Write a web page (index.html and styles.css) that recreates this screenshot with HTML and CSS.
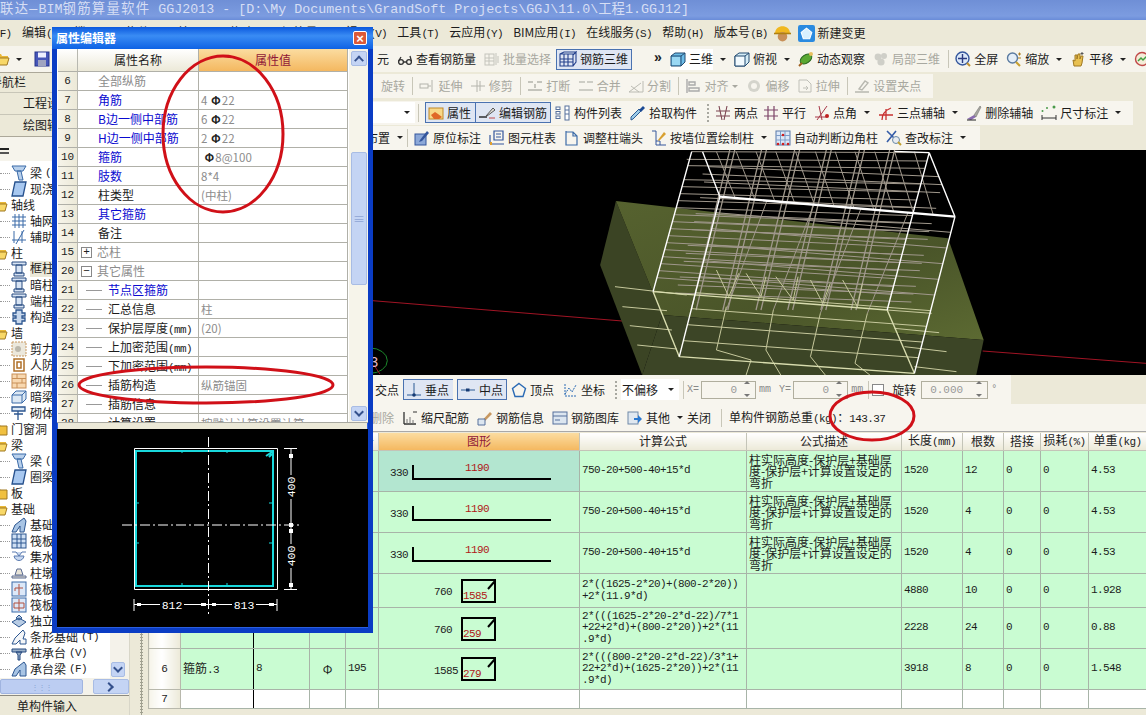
FILE: index.html
```html
<!DOCTYPE html>
<html lang="zh">
<head>
<meta charset="utf-8">
<title>GGJ2013</title>
<link rel="stylesheet" href="styles.css">
</head>
<body>
<svg class="sprite" aria-hidden="true">
<symbol id="folder" viewBox="0 0 16 16"><path d="M1 5l1-2h5l1 2h6v2H1z" fill="#e8b838"/><path d="M1 14l2-7h12l-2 7z" fill="#f8d868" stroke="#a07820"/></symbol>
<symbol id="folderc" viewBox="0 0 16 16"><path d="M1 3h6l1 2h7v9H1z" fill="#f0c040" stroke="#a07820"/></symbol>
<symbol id="save" viewBox="0 0 16 16"><rect x="1" y="1" width="14" height="14" fill="#4656b8" stroke="#26348c"/><rect x="4" y="1.500" width="8" height="5" fill="#eef0ff"/><rect x="4" y="9" width="8" height="6" fill="#a0a4c0"/></symbol>
<symbol id="glasses" viewBox="0 0 16 16"><g fill="none" stroke="#333" stroke-width="1.300"><circle cx="4" cy="11" r="2.400"/><circle cx="12" cy="11" r="2.400"/><path d="M6.400 11h3.200M1.600 10L4 6M14.400 10L13 5"/></g></symbol>
<symbol id="batch" viewBox="0 0 16 16"><g fill="none" stroke="#c4c4bc"><rect x="1" y="3" width="9" height="11"/><path d="M1 7h9M1 10h9M5 3v11M12 2v12M14 5v7"/></g></symbol>
<symbol id="rebar3d" viewBox="0 0 18 16"><g fill="none" stroke="#23408c" stroke-width="1.100"><path d="M1 3l4-2h12l-3 3v11H1zM1 3h13v12M14 4l3-3v10l-3 4M1 8h13M1 11h13M5 3v12M9 3v12"/></g></symbol>
<symbol id="cube" viewBox="0 0 16 16"><path d="M1 5l4-3h10v9l-4 4H1z" fill="#6cbce8" stroke="#234a70"/><path d="M1 5h10v10M11 5l4-3" fill="none" stroke="#234a70"/><path d="M2 6h8v8H2z" fill="#9ad8f4"/></symbol>
<symbol id="cube2" viewBox="0 0 16 16"><path d="M1 5l4-3h10v9l-4 4H1z" fill="#d4ecf6" stroke="#234a70"/><path d="M1 5h10v10H1z" fill="#f2fafe" stroke="#234a70"/><path d="M11 5l4-3" fill="none" stroke="#234a70"/></symbol>
<symbol id="orbit" viewBox="0 0 16 16"><ellipse cx="8" cy="8" rx="6.500" ry="4" transform="rotate(-35 8 8)" fill="#5aa832" stroke="#2c6a20"/><path d="M1 15l3-3" stroke="#a06020" stroke-width="2"/><circle cx="13" cy="3" r="2" fill="#e8c060"/></symbol>
<symbol id="local3d" viewBox="0 0 16 16"><g fill="#cfcfc8"><circle cx="5" cy="6" r="3.400"/><circle cx="11" cy="5" r="3"/><circle cx="8" cy="11" r="3.600"/></g></symbol>
<symbol id="fit" viewBox="0 0 16 16"><circle cx="7.500" cy="7.500" r="6.500" fill="#dbe8f8" stroke="#34569c" stroke-width="1.400"/><path d="M7.500 3v9M3 7.500h9" stroke="#2a3a80" stroke-width="1.400"/><path d="M12 12l3 3" stroke="#c09030" stroke-width="2"/></symbol>
<symbol id="magn" viewBox="0 0 16 16"><circle cx="6.500" cy="7" r="5" fill="#e4eef8" stroke="#5a7aa0" stroke-width="1.400"/><path d="M10 11l4 4" stroke="#c8a030" stroke-width="2.200"/><path d="M12 3h3M13.500 1.500v3M12 7h3" stroke="#b08020"/></symbol>
<symbol id="hand" viewBox="0 0 16 16"><path d="M4 15l-1-6 2 1V4h2v4l1-5h2v5l1-3h2l-1 7-1 3z" fill="#e8c050" stroke="#a07820"/><path d="M12 1v3M10.500 2.500h3" stroke="#555"/></symbol>
<symbol id="refresh" viewBox="0 0 16 16"><circle cx="8" cy="8" r="6.500" fill="#f4ecd8" stroke="#c04848" stroke-width="1.400"/><path d="M4 10l3-3 2 2 4-4" fill="none" stroke="#40a040" stroke-width="1.500"/></symbol>
<symbol id="extend" viewBox="0 0 16 16"><g fill="none" stroke="#b4b4ac"><rect x="1" y="6" width="8" height="4"/><path d="M13 2v12M9 8h3"/></g></symbol>
<symbol id="trim" viewBox="0 0 16 16"><g fill="none" stroke="#b4b4ac"><path d="M1 8h14M7 2v12M10 3v10"/></g></symbol>
<symbol id="brk" viewBox="0 0 16 16"><g fill="#c4c4bc"><rect x="1" y="3" width="5" height="2"/><rect x="10" y="3" width="5" height="2"/><rect x="1" y="11" width="14" height="2"/><rect x="7" y="6" width="2" height="4"/></g></symbol>
<symbol id="merge" viewBox="0 0 16 16"><g fill="#cdcdc5"><rect x="1" y="3" width="6" height="2"/><rect x="9" y="3" width="6" height="2"/><rect x="1" y="11" width="14" height="2"/></g></symbol>
<symbol id="split" viewBox="0 0 16 16"><g fill="none" stroke="#bcbcb4"><path d="M1 14h14L15 3M1 14l12-9M3 8l8 6"/></g></symbol>
<symbol id="align" viewBox="0 0 16 16"><g fill="none" stroke="#aaa" stroke-width="1.400"><path d="M2 1v14M4 4h6v3H4zM4 10h10v3H4z"/></g></symbol>
<symbol id="offs" viewBox="0 0 16 16"><g fill="#d4d4cc"><circle cx="8" cy="8" r="6"/><circle cx="8" cy="8" r="3" fill="#f7f5ee"/></g></symbol>
<symbol id="stretch" viewBox="0 0 16 16"><g fill="none" stroke="#c0c0b8"><path d="M2 2h8l4 4v8H2zM6 10h5M9 8l2 2-2 2"/></g></symbol>
<symbol id="grips" viewBox="0 0 16 16"><g fill="none" stroke="#b8b8b0" stroke-width="1.400"><path d="M1 14h14M5 11l6-8 3 2-6 7z"/></g></symbol>
<symbol id="prop" viewBox="0 0 16 16"><rect x="1" y="3" width="14" height="11" fill="#f8d888" stroke="#c08828"/><path d="M3 10l4-3 3 2 4 3-3 2H6z" fill="#e06828"/></symbol>
<symbol id="edit" viewBox="0 0 18 16"><path d="M1 12h8" stroke="#222" stroke-width="1.400"/><path d="M8 11l7-8 2 2-8 6z" fill="#e0e0d8" stroke="#555"/><path d="M11 13h6" stroke="#c04848"/></symbol>
<symbol id="list" viewBox="0 0 16 16"><g fill="#fff" stroke="#56709c"><rect x="1" y="2" width="4" height="2.500"/><rect x="1" y="6.500" width="4" height="2.500"/><rect x="1" y="11" width="4" height="2.500"/><rect x="10" y="1" width="4" height="14"/><path d="M10 5h4M10 9h4" fill="none"/></g></symbol>
<symbol id="pick" viewBox="0 0 16 16"><path d="M1 15l2-1 8-8-2-2-8 8z" fill="#9ccce8" stroke="#2a5a94"/><path d="M9 5l4-4 2 2-4 4z" fill="#1c4a94"/></symbol>
<symbol id="twopt" viewBox="0 0 16 16"><g stroke="#7c4450" fill="none"><path d="M4 1l3 14M12 1L9 15M1 6h14M1 11h14" stroke-width="1.100"/></g></symbol>
<symbol id="paral" viewBox="0 0 16 16"><path d="M5 1v14M11 1v14M1 5h14M1 11h14" stroke="#7c4468" fill="none" stroke-width="1.200"/></symbol>
<symbol id="angle" viewBox="0 0 16 16"><g fill="none" stroke="#a83848"><path d="M1 12h12M5 1l3 14M13 1L3 15"/></g><circle cx="13" cy="11" r="2" fill="#c02020"/></symbol>
<symbol id="three" viewBox="0 0 16 16"><g fill="none" stroke="#c83030" stroke-width="1.300"><path d="M1 10h14M4 15c0-7 4-10 9-12M8 4v11"/></g></symbol>
<symbol id="delax" viewBox="0 0 16 16"><path d="M1 14l7-4 2 2-5 3z" fill="#8a6cb0"/><path d="M8 10l6-9 1 1-5 10z" fill="#a8a8a0" stroke="#666" stroke-width=".5"/><path d="M1 15h9" stroke="#222"/></symbol>
<symbol id="dim" viewBox="0 0 16 16"><path d="M1 10v5M15 10v5M1 13h14" stroke="#333" fill="none"/><circle cx="1.500" cy="6" r="1" fill="#4a9a4a"/><circle cx="6" cy="3" r="1" fill="#4a9a4a"/><circle cx="13" cy="2" r="1.500" fill="#4a9a4a"/></symbol>
<symbol id="orig" viewBox="0 0 16 16"><rect x="1" y="4" width="11" height="11" fill="#8ca8d8" stroke="#34569c"/><path d="M6 10l7-9 2 2-7 8-3 1z" fill="#34569c"/></symbol>
<symbol id="coltab" viewBox="0 0 16 16"><g fill="none" stroke="#34569c"><path d="M1 14h14M1 5v9M5 1h9v9H5z" stroke-width="1.200"/><path d="M7 4h5M7 7h5"/></g><rect x="1" y="12" width="2" height="3" fill="#e0a030"/></symbol>
<symbol id="adj" viewBox="0 0 16 16"><g fill="none" stroke="#3c6ca8" stroke-width="1.200"><path d="M2 1v14h11V6l-4-4H2M9 2v4h4"/></g></symbol>
<symbol id="wallcol" viewBox="0 0 16 16"><g fill="none" stroke="#34569c"><path d="M1 1h4v14h10M5 11h4v4"/></g><path d="M7 10l6-8 2 2-7 7z" fill="#d8a030"/></symbol>
<symbol id="auto" viewBox="0 0 16 16"><rect x="1" y="1" width="14" height="14" fill="#dce8f8" stroke="#5878a8"/><path d="M1 5.500h14M1 10h14M5.500 1v14M10 1v14" stroke="#7c9cc8" fill="none"/><g fill="#d02020"><circle cx="8" cy="5" r="1.300"/><circle cx="3" cy="14" r="1.300"/><circle cx="8" cy="14" r="1.300"/><circle cx="13" cy="14" r="1.300"/></g></symbol>
<symbol id="review" viewBox="0 0 16 16"><path d="M1 1l9 9M10 1L1 12" stroke="#345ca8" stroke-width="1.600" fill="none"/><circle cx="10" cy="10" r="3.500" fill="#e8ecf0" stroke="#6888a8"/><path d="M12 12l3 3" stroke="#c0a030" stroke-width="2"/></symbol>
<symbol id="foot" viewBox="0 0 16 16"><path d="M1 13h14" stroke="#2a5a94"/><path d="M8 1v12" stroke="#2a5a94"/><circle cx="8" cy="13" r="1.800" fill="#163a74"/></symbol>
<symbol id="mid" viewBox="0 0 16 16"><path d="M1 8h14" stroke="#2a5a94"/><rect x="6" y="6.500" width="3.500" height="3" fill="#163a74"/></symbol>
<symbol id="vert" viewBox="0 0 16 16"><path d="M8 1.500l6.500 5-2.500 8H4l-2.500-8z" fill="none" stroke="#2a6ab4" stroke-width="1.400"/></symbol>
<symbol id="coord" viewBox="0 0 16 16"><path d="M3 2v12h12M3 12l4-6 3 4 4-7" fill="none" stroke="#2a6ab4" stroke-dasharray="2 1"/></symbol>
<symbol id="scale" viewBox="0 0 16 16"><path d="M2 2v12M2 14h12" stroke="#333" stroke-width="1.300" fill="none"/><path d="M5 14V9M8 14V7M11 14V10" stroke="#777" fill="none"/><path d="M11 2h4" stroke="#333"/></symbol>
<symbol id="info" viewBox="0 0 16 16"><path d="M1 15L13 2l2 2L4 15z" fill="#c89860"/><path d="M1 9h7v6H1z" fill="#dce6f0" stroke="#56709c"/></symbol>
<symbol id="lib" viewBox="0 0 16 16"><rect x="1" y="2" width="14" height="12" fill="#dce6f0" stroke="#56709c"/><path d="M1 6h14M3 10h5" stroke="#56709c"/></symbol>
<symbol id="other" viewBox="0 0 16 16"><rect x="1" y="2" width="10" height="12" fill="#e0e8f0" stroke="#708aa8"/><path d="M7 8h4V5l4 4-4 4v-3H7z" fill="#2a78d0"/></symbol>
<symbol id="beam" viewBox="0 0 16 16"><path d="M1 1h14l-3 5H4zM6 6h4l2 9H8z" fill="#b8d0ec" stroke="#3a6aa8"/></symbol>
<symbol id="plate" viewBox="0 0 16 16"><path d="M4 1h11l-3 14H1z" fill="#a8c8f0" stroke="#26508c" stroke-width="1.300"/></symbol>
<symbol id="grid" viewBox="0 0 16 16"><path d="M4 1v14M8 1v14M12 1v14M1 4h14M1 8h14M1 12h14" stroke="#3a6aa8" fill="none"/></symbol>
<symbol id="aux" viewBox="0 0 16 16"><path d="M3 14V2M11 14V2M1 11h14M13 1L5 15" stroke="#3a6aa8" fill="none"/></symbol>
<symbol id="col" viewBox="0 0 16 16"><path d="M1 1h14v3H1zM5 4h6v8H5zM3 12h10v3H3z" fill="#d8e4f4" stroke="#264a80"/></symbol>
<symbol id="puzzle" viewBox="0 0 16 16"><path d="M5 1h6v3h3v3h-3v2h3v3h-3v3H5v-3H2V9h3V7H2V4h3z" fill="#c8d8ec" stroke="#2c5690" stroke-width="1.300"/></symbol>
<symbol id="shear" viewBox="0 0 16 16"><rect x="1" y="1" width="14" height="14" fill="#ece8dc" stroke="#c89860" stroke-dasharray="2 1"/><circle cx="7" cy="8" r="3" fill="#bcb8ac"/></symbol>
<symbol id="door" viewBox="0 0 16 16"><path d="M3 2h10v12H3zM6 5h4v6H6z" fill="none" stroke="#b07028" stroke-width="1.500"/></symbol>
<symbol id="brick" viewBox="0 0 16 16"><rect x="1" y="1" width="14" height="14" fill="#f8d8b0" stroke="#c89058"/><path d="M1 5.500h14M1 10h14M6 1v4.500M11 5.500V10M6 10v5" stroke="#c89058" fill="none"/></symbol>
<symbol id="dbeam" viewBox="0 0 16 16"><path d="M1 6l4-4h10v8l-4 4H1z" fill="#dce8f4" stroke="#3a6aa8"/><path d="M1 6h10v8M11 6l4-4" fill="none" stroke="#3a6aa8"/></symbol>
<symbol id="brebar" viewBox="0 0 16 16"><path d="M1 2h13v4H1zM7 6v9M3 9h9" fill="#dce8f4" stroke="#2c5690" stroke-width="1.300"/></symbol>
<symbol id="found" viewBox="0 0 16 16"><path d="M1 15l3-7 9-7 2 3-2 11H9V9L5 15z" fill="#a8c4e4" stroke="#2c5690"/></symbol>
<symbol id="raft" viewBox="0 0 16 16"><rect x="1" y="1" width="14" height="14" fill="#cfe0f4" stroke="#2c5690"/><path d="M1 6h14M1 10h14M6 1v14M10 1v14" stroke="#2c5690" fill="none"/></symbol>
<symbol id="pit" viewBox="0 0 16 16"><path d="M1 3h4l3 4 3-4h4M3 7c1 6 9 6 10 0z" fill="#c8d8f0" stroke="#5a7ab0"/></symbol>
<symbol id="pier" viewBox="0 0 16 16"><path d="M6 4h4l2 6H4zM1 11h14v2H1z" fill="#e8e4d8" stroke="#5a6a90"/></symbol>
<symbol id="raftx" viewBox="0 0 16 16"><rect x="1" y="1" width="14" height="14" fill="#dce8f8" stroke="#3a6aa8"/><path d="M8 3v11M4 7h8M4 7v3" stroke="#b05040" fill="none"/></symbol>
<symbol id="raftm" viewBox="0 0 16 16"><rect x="1" y="1" width="14" height="14" fill="#dce8f8" stroke="#3a6aa8"/><path d="M8 2v12M3 6h10v5H3z" stroke="#b05040" fill="none"/></symbol>
<symbol id="indep" viewBox="0 0 16 16"><path d="M1 9l7-4 7 4-7 5zM5 5l3-3 3 3-3 2z" fill="#b8cce4" stroke="#2c5690"/></symbol>
<symbol id="strip" viewBox="0 0 16 16"><path d="M1 15l3-6 8-8 2 3-2 6h3v5H9v-4l-4 4z" fill="#f4f6f8" stroke="#2c5690"/></symbol>
<symbol id="cap" viewBox="0 0 16 16"><path d="M1 4h14v3H1zM5 7h6l-2 3v5H7v-5z" fill="#9ab0c8" stroke="#264a80"/></symbol>
<symbol id="capb" viewBox="0 0 16 16"><path d="M1 15l3-7 9-7 2 3v11H9V9L5 15z" fill="#a8c4e4" stroke="#2c5690"/></symbol>
</svg>

<div class="app">
  <header class="title"><span class="t-cn">联达—</span>BIM<span class="t-cn">钢筋算量软件</span> GGJ2013 - [D:\My Documents\GrandSoft Projects\GGJ\11.0\工程1.GGJ12]</header>

  <nav class="menu">
    <span class="m-f"><small>(F)</small></span><span>编辑<small>(E)</small></span><span>楼层<small>(L)</small></span><span>构件<small>(N)</small></span><span>绘图<small>(D)</small></span><span>修改<small>(M)</small></span><span>钢筋量<small>(Q)</small></span><span>视图<small>(V)</small></span><span>工具<small>(T)</small></span><span>云应用<small>(Y)</small></span><span>BIM应用<small>(I)</small></span><span>在线服务<small>(S)</small></span><span>帮助<small>(H)</small></span><span>版本号<small>(B)</small></span>
    <svg class="ic hat" viewBox="0 0 16 16"><path d="M1 8c0-9 14-9 14 0z" fill="#f0b820"/><circle cx="8" cy="11" r="4.500" fill="#c89058"/><path d="M0 8h16" stroke="#b08010" stroke-width="1.500"/></svg>
    <span class="newchg"><svg class="ic" viewBox="0 0 16 16"><rect width="16" height="16" rx="2" fill="#2a8ae0"/><path d="M8 3l5 4-2 6H5L3 7z" fill="#d8f0ff" stroke="#fff"/></svg>新建变更</span>
  </nav>

  <div class="bar t1">
    <div class="t1-left">
      <svg class="ic"><use href="#folder"/></svg><i class="dd"></i><svg class="ic"><use href="#save"/></svg><b class="sep"></b>
    </div>
    <span class="ti t1-first">元</span>
    <span class="ti"><svg class="ic"><use href="#glasses"/></svg>查看钢筋量</span>
    <span class="ti off tight"><svg class="ic"><use href="#batch"/></svg>批量选择</span>
    <span class="ti on"><svg class="ic wide"><use href="#rebar3d"/></svg>钢筋三维</span>
    <span class="more">»</span>
    <span class="ti tight hl"><svg class="ic"><use href="#cube"/></svg>三维</span><i class="dd"></i>
    <span class="ti tight"><svg class="ic"><use href="#cube2"/></svg>俯视</span><i class="dd"></i>
    <span class="ti"><svg class="ic"><use href="#orbit"/></svg>动态观察</span>
    <span class="ti off"><svg class="ic"><use href="#local3d"/></svg>局部三维</span><b class="sep"></b>
    <span class="ti"><svg class="ic"><use href="#fit"/></svg>全屏</span>
    <span class="ti tight"><svg class="ic"><use href="#magn"/></svg>缩放</span><i class="dd"></i>
    <span class="ti tight"><svg class="ic"><use href="#hand"/></svg>平移</span><i class="dd"></i>
    <svg class="ic"><use href="#refresh"/></svg>
  </div>

  <div class="body">
    <aside class="side">
      <div class="side-head"><span>导航栏</span></div>
      <div class="side-btn">工程设置</div>
      <div class="side-btn">绘图输入</div>
      <div class="side-tools"><i class="tool-bar"></i></div>
      <div class="tree-wrap">
        <ul class="tree">
          <li class="leaf"><svg class="ic"><use href="#beam"/></svg>梁<small>(L)</small></li>
          <li class="leaf"><svg class="ic"><use href="#plate"/></svg>现浇板<small>(B)</small></li>
          <li class="node"><svg class="ic"><use href="#folder"/></svg>轴线</li>
          <li class="leaf"><svg class="ic"><use href="#grid"/></svg>轴网<small>(J)</small></li>
          <li class="leaf"><svg class="ic"><use href="#aux"/></svg>辅助轴线<small>(O)</small></li>
          <li class="node"><svg class="ic"><use href="#folder"/></svg>柱</li>
          <li class="leaf"><svg class="ic"><use href="#col"/></svg><span class="sel-item">框柱<small>(Z)</small></span></li>
          <li class="leaf"><svg class="ic"><use href="#col"/></svg>暗柱<small>(Z)</small></li>
          <li class="leaf"><svg class="ic"><use href="#col"/></svg>端柱<small>(Z)</small></li>
          <li class="leaf"><svg class="ic"><use href="#puzzle"/></svg>构造柱<small>(Z)</small></li>
          <li class="node"><svg class="ic"><use href="#folder"/></svg>墙</li>
          <li class="leaf"><svg class="ic"><use href="#shear"/></svg>剪力墙<small>(Q)</small></li>
          <li class="leaf"><svg class="ic"><use href="#door"/></svg>人防门框墙<small>(RF)</small></li>
          <li class="leaf"><svg class="ic"><use href="#brick"/></svg>砌体墙<small>(Q)</small></li>
          <li class="leaf"><svg class="ic"><use href="#dbeam"/></svg>暗梁<small>(A)</small></li>
          <li class="leaf"><svg class="ic"><use href="#brebar"/></svg>砌体加筋<small>(Y)</small></li>
          <li class="node"><svg class="ic"><use href="#folderc"/></svg>门窗洞</li>
          <li class="node"><svg class="ic"><use href="#folder"/></svg>梁</li>
          <li class="leaf"><svg class="ic"><use href="#beam"/></svg>梁<small>(L)</small></li>
          <li class="leaf"><svg class="ic"><use href="#plate"/></svg>圈梁<small>(E)</small></li>
          <li class="node"><svg class="ic"><use href="#folderc"/></svg>板</li>
          <li class="node"><svg class="ic"><use href="#folder"/></svg>基础</li>
          <li class="leaf"><svg class="ic"><use href="#found"/></svg>基础梁<small>(F)</small></li>
          <li class="leaf"><svg class="ic"><use href="#raft"/></svg>筏板基础<small>(M)</small></li>
          <li class="leaf"><svg class="ic"><use href="#pit"/></svg>集水坑<small>(K)</small></li>
          <li class="leaf"><svg class="ic"><use href="#pier"/></svg>柱墩<small>(Y)</small></li>
          <li class="leaf"><svg class="ic"><use href="#raftx"/></svg>筏板主筋<small>(R)</small></li>
          <li class="leaf"><svg class="ic"><use href="#raftm"/></svg>筏板负筋<small>(X)</small></li>
          <li class="leaf"><svg class="ic"><use href="#indep"/></svg>独立基础<small>(D)</small></li>
          <li class="leaf"><svg class="ic"><use href="#strip"/></svg>条形基础<small>(T)</small></li>
          <li class="leaf"><svg class="ic"><use href="#cap"/></svg>桩承台<small>(V)</small></li>
          <li class="leaf"><svg class="ic"><use href="#capb"/></svg>承台梁<small>(F)</small></li>
        </ul>
        <div class="vscroll"><span class="sb-arrow down"></span></div>
      </div>
      <div class="hscroll"><span class="hthumb">⋮⋮⋮</span><span class="sb-arrow right"></span></div>
      <div class="side-foot">单构件输入</div>
    </aside>

    <div class="split"></div>

    <main class="right">
      <div class="row r2"><div class="band off">
        <span class="ti">旋转</span><b class="sep"></b>
        <span class="ti"><svg class="ic"><use href="#extend"/></svg>延伸</span>
        <span class="ti"><svg class="ic"><use href="#trim"/></svg>修剪</span><b class="sep"></b>
        <span class="ti"><svg class="ic"><use href="#brk"/></svg>打断</span>
        <span class="ti"><svg class="ic"><use href="#merge"/></svg>合并</span>
        <span class="ti"><svg class="ic"><use href="#split"/></svg>分割</span><b class="sep"></b>
        <span class="ti tight"><svg class="ic"><use href="#align"/></svg>对齐</span><i class="dd soft"></i>
        <span class="ti"><svg class="ic"><use href="#offs"/></svg>偏移</span>
        <span class="ti"><svg class="ic"><use href="#stretch"/></svg>拉伸</span><b class="sep"></b>
        <span class="ti"><svg class="ic"><use href="#grips"/></svg>设置夹点</span>
      </div></div>

      <div class="row r3"><div class="band">
        <span class="combo"><i class="dd"></i></span><b class="sep"></b>
        <span class="ti on left"><svg class="ic"><use href="#prop"/></svg>属性</span>
        <span class="ti on"><svg class="ic wide"><use href="#edit"/></svg>编辑钢筋</span>
        <span class="ti"><svg class="ic"><use href="#list"/></svg>构件列表</span>
        <span class="ti"><svg class="ic"><use href="#pick"/></svg>拾取构件</span>
        <i class="grip"></i>
        <span class="ti tight"><svg class="ic"><use href="#twopt"/></svg>两点</span>
        <span class="ti"><svg class="ic"><use href="#paral"/></svg>平行</span>
        <span class="ti tight"><svg class="ic"><use href="#angle"/></svg>点角</span><i class="dd"></i>
        <span class="ti tight"><svg class="ic"><use href="#three"/></svg>三点辅轴</span><i class="dd"></i>
        <span class="ti"><svg class="ic"><use href="#delax"/></svg>删除辅轴</span>
        <span class="ti tight"><svg class="ic"><use href="#dim"/></svg>尺寸标注</span><i class="dd"></i>
      </div></div>

      <div class="row r4"><div class="band">
        <span class="ti tight">布置</span><i class="dd near"></i><b class="sep"></b>
        <span class="ti"><svg class="ic"><use href="#orig"/></svg>原位标注</span>
        <span class="ti"><svg class="ic"><use href="#coltab"/></svg>图元柱表</span>
        <span class="ti"><svg class="ic"><use href="#adj"/></svg>调整柱端头</span>
        <span class="ti tight"><svg class="ic"><use href="#wallcol"/></svg>按墙位置绘制柱</span><i class="dd"></i>
        <span class="ti"><svg class="ic"><use href="#auto"/></svg>自动判断边角柱</span>
        <span class="ti tight"><svg class="ic"><use href="#review"/></svg>查改标注</span><i class="dd"></i>
      </div></div>

      <div class="view">
        <svg class="v3d" viewBox="0 0 1568 675" preserveAspectRatio="none">
          <defs>
            <linearGradient id="olive" x1="0" y1="0" x2="1" y2="1"><stop offset="0" stop-color="#56622f"/><stop offset=".6" stop-color="#4a5529"/><stop offset="1" stop-color="#5c6a32"/></linearGradient>
          </defs>
          <path d="M5 452L510 513M1238 603L1568 640" stroke="#a01424" fill="none"/>
          <polygon points="497,153 465,345 550,675 590,495" fill="#3b4424"/>
          <polygon points="497,153 1168,265 1240,570 590,495" fill="url(#olive)"/>
          <polygon points="590,495 1240,570 1225,675 550,675" fill="#3c4526"/>
          <path d="M650 5L1130 8M642 47L1121 55M634 89L1113 102M627 131L1104 150M619 173L1096 197M611 215L1087 244M603 257L1079 291M595 299L1070 338M588 341L1062 386M580 383L1053 433M640 28L1125 33M630 110L1108 126M622 152L1100 173M615 194L1092 220M607 236L1083 268M599 278L1075 314M591 320L1066 362M584 362L1058 410M699 188L1174 247M691 236L1166 294M682 284L1157 341M674 332L1149 388M666 380L1141 435M675 96L1152 128M667 143L1144 175M658 191L1135 221M650 239L1127 268M642 286L1119 316M634 334L1111 362M626 381L1103 409M617 429L1094 456M684 50L1150 80M672 72L1156 104M655 215L1130 245M638 310L1115 340M622 405L1098 432" fill="none" stroke="#a0988c"/>
          <path d="M700 5L738 144M740 5L778 149M780 5L818 154M820 5L858 159M860 5L898 164M900 5L938 169M940 5L978 174M980 5L1018 179M1020 5L1058 184M1060 5L1098 189M1100 5L1138 194M802 152L720 480M897 164L815 480M992 176L910 490M1087 188L1005 490" fill="none" stroke="#a0988c"/>
          <path class="wg" d="M727 0L649 480M737 0L659 480M791 0L713 480M801 0L723 480M858 0L780 480M868 0L790 480M922 0L844 480M932 0L854 480M989 0L911 480M999 0L921 480M1050 0L972 480M1060 0L982 480" fill="none" stroke="#a0988c"/>
          <path d="M760 370L790 440L800 380M820 380L855 450L865 380M890 390L915 460L930 400M955 390L985 470L995 400M700 360L725 440L745 370M658 428L1133 482M650 476L1125 529M641 524L1116 576M633 572L1108 623M495 410L640 435M510 470L600 482M525 527L610 540M540 585L620 597M1045 480L1135 490M1060 535L1150 548M1080 590L1165 605M1100 650L1185 665M720 470L700 600L770 630L760 675M815 480L800 600L830 675M910 490L890 620L920 675M1005 490L980 640L1010 675" fill="none" stroke="#c6c89c"/>
          <path class="wt" d="M572 425L1045 480M625 620L1100 670M572 425L625 620M1045 480L1100 670" fill="none" stroke="#d8dcae"/>
          <path class="wb" d="M707 140L1182 200" fill="none" stroke="#fff"/>
          <path class="wt" d="M650 5L572 425M1130 8L1182 200M672 5L707 140M707 140L625 620M1182 200L1100 670M1130 8L1045 480M1060 4L1130 8" fill="none" stroke="#fff"/>
          <ellipse cx="0" cy="632" rx="35" ry="38" fill="none" stroke="#1c8a2c"/>
          <path d="M8 645L20 672" stroke="#a01424"/>
          <text class="glyph3" transform="translate(0 650) scale(2.02 3)">3</text>
        </svg>
      </div>

      <div class="row b1"><div class="band">
        <span class="ti tight">交点</span>
        <span class="ti on left"><svg class="ic"><use href="#foot"/></svg>垂点</span>
        <span class="ti on"><svg class="ic"><use href="#mid"/></svg>中点</span>
        <span class="ti"><svg class="ic"><use href="#vert"/></svg>顶点</span>
        <span class="ti"><svg class="ic"><use href="#coord"/></svg>坐标</span>
        <i class="grip"></i>
        <span class="combo short">不偏移<i class="dd"></i></span><b class="sep"></b>
        <span class="lab">X=</span><span class="num">0<i class="spin"></i></span><span class="lab mm">mm</span>
        <span class="lab">Y=</span><span class="num">0<i class="spin"></i></span><span class="lab mm">mm</span><b class="sep pull"></b>
        <i class="chk"></i><span class="ti lab-rot">旋转</span><span class="num rot">0.000<i class="spin"></i></span><span class="lab deg">°</span>
      </div></div>

      <div class="row b2">
        <span class="ti off">删除</span>
        <span class="ti"><svg class="ic"><use href="#scale"/></svg>缩尺配筋</span>
        <span class="ti"><svg class="ic"><use href="#info"/></svg>钢筋信息</span>
        <span class="ti"><svg class="ic"><use href="#lib"/></svg>钢筋图库</span>
        <span class="ti tight"><svg class="ic"><use href="#other"/></svg>其他</span><i class="dd near"></i>
        <span class="ti close">关闭</span><b class="sep"></b>
        <span class="total">单构件钢筋总重<small>(kg)</small>：<em>143.37</em></span>
      </div>

      <table class="grid-t">
        <colgroup><col class="c0"><col class="c1"><col class="c2"><col class="c3"><col class="c4"><col class="c5"><col class="c6"><col class="c7"><col class="c8"><col class="c9"><col class="c10"><col class="c11"><col class="c12"></colgroup>
        <thead>
          <tr><th class="n"></th><th>筋号</th><th>直径<small>(mm)</small></th><th>级别</th><th>图号</th><th class="hot">图形</th><th>计算公式</th><th>公式描述</th><th>长度<small>(mm)</small></th><th>根数</th><th>搭接</th><th>损耗<small>(%)</small></th><th>单重<small>(kg)</small></th></tr>
        </thead>
        <tbody>
          <tr class="h41"><th class="n">1</th><td class="bar-r"></td><td></td><td></td><td></td>
            <td class="shape sel"><svg class="sh"><text x="11" y="25" class="sh-t">330</text><path class="sh-l" d="M34 14v14h138"/><text x="86" y="20" class="sh-r">1190</text></svg></td>
            <td class="m">750-20+500-40+15*d</td><td class="d">柱实际高度-保护层+基础厚<br>度-保护层+计算设置设定的<br>弯折</td><td class="m">1520</td><td class="m">12</td><td class="m">0</td><td class="m">0</td><td class="m">4.53</td></tr>
          <tr class="h41"><th class="n">2</th><td class="bar-r"></td><td></td><td></td><td></td>
            <td class="shape"><svg class="sh"><text x="11" y="25" class="sh-t">330</text><path class="sh-l" d="M34 14v14h138"/><text x="86" y="20" class="sh-r">1190</text></svg></td>
            <td class="m">750-20+500-40+15*d</td><td class="d">柱实际高度-保护层+基础厚<br>度-保护层+计算设置设定的<br>弯折</td><td class="m">1520</td><td class="m">4</td><td class="m">0</td><td class="m">0</td><td class="m">4.53</td></tr>
          <tr class="h41"><th class="n">3</th><td class="bar-r"></td><td></td><td></td><td></td>
            <td class="shape"><svg class="sh"><text x="11" y="25" class="sh-t">330</text><path class="sh-l" d="M34 14v14h138"/><text x="86" y="20" class="sh-r">1190</text></svg></td>
            <td class="m">750-20+500-40+15*d</td><td class="d">柱实际高度-保护层+基础厚<br>度-保护层+计算设置设定的<br>弯折</td><td class="m">1520</td><td class="m">4</td><td class="m">0</td><td class="m">0</td><td class="m">4.53</td></tr>
          <tr class="h34"><th class="n">4</th><td class="bar-r"></td><td></td><td></td><td></td>
            <td class="shape"><svg class="sh sh34"><text x="55" y="21" class="sh-t">760</text><path class="sh-b" d="M83 6h33v22H83zM109 15l7-8"/><text x="84" y="25" class="sh-r">1585</text></svg></td>
            <td class="m f">2*((1625-2*20)+(800-2*20))<br>+2*(11.9*d)</td><td></td><td class="m">4880</td><td class="m">10</td><td class="m">0</td><td class="m">0</td><td class="m">1.928</td></tr>
          <tr class="h41"><th class="n">5</th><td class="bar-r"></td><td></td><td></td><td></td>
            <td class="shape"><svg class="sh"><text x="55" y="25" class="sh-t">760</text><path class="sh-b" d="M83 10h33v22H83zM109 19l7-8"/><text x="84" y="29" class="sh-r">259</text></svg></td>
            <td class="m f">2*(((1625-2*20-2*d-22)/7*1<br>+22+2*d)+(800-2*20))+2*(11<br>.9*d)</td><td></td><td class="m">2228</td><td class="m">24</td><td class="m">0</td><td class="m">0</td><td class="m">0.88</td></tr>
          <tr class="h41"><th class="n">6</th><td class="txt bar-r">箍筋<small>.3</small></td><td class="m">8</td><td class="lvl">Φ</td><td class="m">195</td>
            <td class="shape"><svg class="sh"><text x="55" y="25" class="sh-t">1585</text><path class="sh-b" d="M83 9h33v22H83zM109 18l7-8"/><text x="84" y="28" class="sh-r">279</text></svg></td>
            <td class="m f">2*(((800-2*20-2*d-22)/3*1+<br>22+2*d)+(1625-2*20))+2*(11<br>.9*d)</td><td></td><td class="m">3918</td><td class="m">8</td><td class="m">0</td><td class="m">0</td><td class="m">1.548</td></tr>
          <tr class="h19 blank"><th class="n">7</th><td class="bar-r"></td><td></td><td></td><td></td><td></td><td></td><td></td><td></td><td></td><td></td><td></td><td></td></tr>
        </tbody>
      </table>
    </main>
  </div>
</div>

<section class="dlg">
  <div class="dlg-title"><span>属性编辑器</span><button class="dlg-x" type="button" aria-label="关闭">×</button></div>
  <div class="dlg-body">
    <div class="pg">
      <div class="pg-rows">
        <div class="pg-head"><span class="g"></span><span class="k">属性名称</span><span class="v">属性值</span></div>
        <div class="pr"><span class="g">6</span><span class="k dim">全部纵筋</span><span class="v"></span></div>
        <div class="pr"><span class="g">7</span><span class="k blue">角筋</span><span class="v">4 <u>Φ</u>22</span></div>
        <div class="pr"><span class="g">8</span><span class="k blue">B边一侧中部筋</span><span class="v">6 <u>Φ</u>22</span></div>
        <div class="pr"><span class="g">9</span><span class="k blue">H边一侧中部筋</span><span class="v">2 <u>Φ</u>22</span></div>
        <div class="pr"><span class="g">10</span><span class="k blue">箍筋</span><span class="v"> <u>Φ</u>8@100</span></div>
        <div class="pr"><span class="g">11</span><span class="k blue">肢数</span><span class="v">8*4</span></div>
        <div class="pr"><span class="g">12</span><span class="k">柱类型</span><span class="v">(中柱)</span></div>
        <div class="pr"><span class="g">13</span><span class="k blue">其它箍筋</span><span class="v"></span></div>
        <div class="pr"><span class="g">14</span><span class="k">备注</span><span class="v"></span></div>
        <div class="pr"><span class="g">15</span><span class="k dim tog"><i class="box">+</i>芯柱</span><span class="v"></span></div>
        <div class="pr"><span class="g">20</span><span class="k dim tog"><i class="box">−</i>其它属性</span><span class="v"></span></div>
        <div class="pr"><span class="g">21</span><span class="k sub blue">节点区箍筋</span><span class="v"></span></div>
        <div class="pr"><span class="g">22</span><span class="k sub">汇总信息</span><span class="v">柱</span></div>
        <div class="pr"><span class="g">23</span><span class="k sub">保护层厚度<small>(mm)</small></span><span class="v">(20)</span></div>
        <div class="pr"><span class="g">24</span><span class="k sub">上加密范围<small>(mm)</small></span><span class="v"></span></div>
        <div class="pr"><span class="g">25</span><span class="k sub">下加密范围<small>(mm)</small></span><span class="v"></span></div>
        <div class="pr"><span class="g">26</span><span class="k sub">插筋构造</span><span class="v">纵筋锚固</span></div>
        <div class="pr"><span class="g">27</span><span class="k sub">插筋信息</span><span class="v"></span></div>
        <div class="pr"><span class="g">28</span><span class="k sub">计算设置</span><span class="v">按默认计算设置计算</span></div>
      </div>
      <div class="pg-sb"><span class="sb-arrow up"></span><span class="pg-thumb">≡</span><span class="sb-arrow down"></span></div>
    </div>
    <svg class="pv" viewBox="57 430 311 198">
      <path class="pv-w" d="M134.500 449.500h143v141h-143z"/>
      <path class="pv-c" d="M136 452h137v135H136z"/>
      <path class="pv-c2" d="M182 452v2M227 452v2M136 504h3M136 544h3M272 504h-3M272 544h-3M182 587v-3M227 587v-3M136 587h3"/>
      <path class="pv-c" d="M266 457l6-4M269 458l3-3"/>
      <path class="pv-d" d="M208.500 438v177M122 526h177"/>
      <path class="pv-w" d="M284 449.500h13M284 590.500h13M291 450v140M134 600v12M277 600v12M134 605.500h143"/>
      <path class="pv-f" d="M289 455h4v4h-4zM289 524h4v4h-4zM289 530h4v4h-4zM289 584h4v4h-4zM137 604h4v3h-4zM201 604h5v3h-5zM212 604h4v3h-4zM269 604h5v3h-5z"/>
      <rect class="pv-k" x="160" y="598" width="24" height="14"/><rect class="pv-k" x="232" y="598" width="24" height="14"/>
      <rect class="pv-k" x="284" y="476" width="14" height="24"/><rect class="pv-k" x="284" y="545" width="14" height="24"/>
      <text class="pv-t" x="172" y="610">812</text><text class="pv-t" x="244" y="610">813</text>
      <text class="pv-t" transform="translate(295 488) rotate(-90)">400</text><text class="pv-t" transform="translate(295 557) rotate(-90)">400</text>
    </svg>
  </div>
</section>

<svg class="marks" viewBox="0 0 1146 715">
  <ellipse cx="223" cy="134" rx="60" ry="78"/>
  <ellipse cx="206" cy="385" rx="127" ry="18"/>
  <ellipse cx="872" cy="416" rx="42" ry="24"/>
</svg>
</body>
</html>
```
FILE: styles.css
```css
* { box-sizing: border-box; }
html, body { margin: 0; height: 100%; overflow: hidden; }
body { position: relative; width: 1146px; height: 715px; background: #ece9d8; color: #1c1c1c; font: 12px/14px "Noto Sans CJK SC", "Liberation Sans", sans-serif; }
small { font: 11px/14px "Liberation Mono", monospace; letter-spacing: -.6px; }
.sprite { position: absolute; width: 0; height: 0; }
.ic { width: 16px; height: 16px; flex: none; display: block; }
.ic.wide { width: 18px; }

.app { display: flex; flex-direction: column; width: 1146px; height: 715px; overflow: hidden; }

.title { height: 20px; flex: none; padding-top: 1px; white-space: pre; overflow: hidden; background: linear-gradient(#6f8fd6, #7c9ce0 80%, #6a8cd8); color: #d6def4; font: 13.330px/18px "Liberation Mono", "Noto Sans CJK SC", monospace; }
.t-cn { letter-spacing: 1.300px; }

.menu { height: 26px; flex: none; display: flex; align-items: center; gap: 10.500px; background: #ece9d8; white-space: nowrap; }
.menu small { letter-spacing: -.8px; }
.m-f { margin-left: -6px; }
.menu .hat { margin-left: -4px; margin-right: -4px; width: 17px; height: 17px; }
.newchg { display: flex; align-items: center; gap: 3px; }
.newchg .ic { width: 17px; height: 17px; }

.bar { height: 26px; flex: none; display: flex; align-items: center; background: #f6f4ec; white-space: nowrap; overflow: hidden; }
.t1-left { width: 383px; flex: none; display: flex; align-items: center; margin-left: -6px; gap: 4px; }
.t1-left .sep { margin-left: 2px; }
.t1-first { margin-right: 8px; }

.ti { display: inline-flex; align-items: center; gap: 3px; margin-right: 8px; height: 21px; white-space: nowrap; flex: none; }
.ti.tight { margin-right: 5px; }
.ti.off, .off .ti { color: #a8a8a0; }
.ti.on { border: 1px solid #4a72b0; background: #dfe6f3; padding: 0 3px 0 2px; margin-right: 4px; }
.ti.on.left { margin-right: 0; border-right: 0; padding-right: 4px; }
.ti.hl { background: #fff; }

.dd { flex: none; width: 0; height: 0; border: 3px solid transparent; border-top: 3px solid #222; border-bottom: 0; margin: 0 8px 0 2px; display: inline-block; }
.dd.soft { border-top-color: #a8a8a0; margin: 0 8px 0 -1px; }
.dd.near { margin-right: 4px; }
.sep { flex: none; width: 1px; height: 18px; background: #c8c6b8; margin: 0 6px 0 0; display: block; }
.grip { flex: none; width: 2px; height: 18px; background: repeating-linear-gradient(#a8a8a0 0 2px, transparent 2px 4px); margin: 0 6px 0 2px; display: block; }
.more { flex: none; width: 10px; margin: -4px 6px 0 18px; font: bold 14px/14px "Liberation Sans", sans-serif; }

.body { flex: 1; min-height: 0; display: flex; }

/* left navigator */
.side { width: 129px; flex: none; display: flex; flex-direction: column; overflow: hidden; }
.side-head { height: 20px; flex: none; border-top: 1px solid #aca899; padding-top: 2px; }
.side-head span { display: block; margin-left: -10px; }
.side-btn { height: 22px; flex: none; border-top: 1px solid #c8c6b8; padding: 3px 0 0 23px; }
.side-tools { height: 25px; flex: none; background: #f6f4ec; border-top: 1px solid #aca899; padding: 11px 0 0 0; }
.tool-bar { display: block; width: 9px; height: 2px; background: #222; box-shadow: 0 4px 0 #555; }
.tree-wrap { flex: 1; min-height: 0; display: flex; background: #fff; }
.tree { list-style: none; margin: 4px 0 0; padding: 0; width: 110px; flex: none; overflow: hidden; }
.tree li { height: 16px; display: flex; align-items: center; white-space: nowrap; gap: 3px; }
.tree .leaf::before { content: ""; flex: none; width: 10px; margin-right: -2px; border-top: 1px dotted #999; }
.tree .node { margin-left: -8px; }
.sel-item { background: #ece9d8; }
.vscroll { flex: 1; background: #f4f2ea; display: flex; flex-direction: column; justify-content: flex-end; padding: 0 4px 1px 1px; }
.sb-arrow { display: block; flex: none; height: 15px; background: #c4d4f4; border: 1px solid #a8bce4; border-radius: 2px; position: relative; }
.sb-arrow::after { content: ""; position: absolute; left: 50%; top: 50%; width: 5px; height: 5px; border: solid #34508c; border-width: 2px 0 0 2px; }
.sb-arrow.down::after { transform: translate(-50%, -80%) rotate(225deg); }
.sb-arrow.up::after { transform: translate(-50%, -30%) rotate(45deg); }
.sb-arrow.right::after { transform: translate(-80%, -50%) rotate(135deg); }
.hscroll { height: 17px; flex: none; display: flex; align-items: flex-start; background: #f4f2ea; padding-top: 1px; }
.hthumb { width: 83px; height: 15px; background: #bccdf2; border: 1px solid #a0b4e0; border-radius: 2px; text-align: center; color: #8ea4d4; font-size: 8px; line-height: 13px; letter-spacing: -1px; margin-right: 10px; }
.hscroll .sb-arrow { width: 15px; }
.side-foot { flex: none; height: 20px; border-top: 1px solid #8c8a80; padding: 3px 0 0 17px; }

.split { width: 18px; flex: none; background: radial-gradient(circle, #a0a090 1px, transparent 1.200px) 10px 0 / 3px 3px repeat-y; border-left: 1px solid #d8d6c8; }

/* right area */
.right { flex: 1; min-width: 0; display: flex; flex-direction: column; overflow: hidden; }
.row { flex: none; display: flex; align-items: center; white-space: nowrap; overflow: hidden; }
.band { display: flex; align-items: center; background: #f7f5ee; height: 24px; padding-right: 4px; }
.r2 { height: 28px; }
.r2 .band { padding-left: 234px; padding-right: 4px; height: 24px; }
.r2 .ti { margin-right: 7.400px; }
.r2 .ti.tight { margin-right: 5px; }
.r3 { height: 25px; }
.r3 .band { padding-right: 4px; }
.r4 { height: 25px; }
.r4 .band { padding-left: 219px; padding-right: 6px; }
.combo { flex: none; display: flex; align-items: center; justify-content: flex-end; background: #fff; width: 268px; height: 21px; margin-right: 3px; }
.combo .dd { margin: 0 5px 0 0; }
.combo.short { width: 58px; margin-right: 4px; justify-content: space-between; padding-left: 1px; }
.view { height: 225px; flex: none; background: #000; display: flex; justify-content: flex-end; }
.v3d { width: 776px; height: 225px; flex: none; display: block; }
.v3d * { vector-effect: non-scaling-stroke; }
.v3d .wb { stroke-width: 2.400px; }
.v3d .wt { stroke-width: 1.400px; }
.v3d .wg { stroke-width: 1.300px; }
.glyph3 { fill: #e8b8c8; font: 14px/14px "Liberation Mono", monospace; }

.b1 { height: 29px; }
.b1 .band { height: 29px; padding-left: 228px; padding-right: 14px; }
.b1 .ti.tight { margin-right: 4px; }
.b1 .ti.on { margin-right: 4px; }
.b1 .grip { margin-right: 4px; }
.b1 .sep { margin-right: 3px; }
.b1 .sep.pull { margin-left: -3px; }
.lab { flex: none; color: #888; font: 10px/14px "Liberation Mono", monospace; }
.lab.mm { margin: 0 8px 0 3px; }
.lab.deg { margin-left: 3px; }
.lab-rot { margin: 0 5px 0 0; }
.b1 .ti.lab-rot { margin-right: 5px; }
.num { flex: none; position: relative; display: block; width: 55px; height: 18px; margin-left: 2px; border: 1px solid #b0ae9e; padding-right: 18px; text-align: right; color: #999; font: 11px/16px "Liberation Mono", monospace; }
.num.rot { width: 67px; margin-left: 0; padding-right: 24px; }
.spin { position: absolute; right: 3px; top: 1px; width: 9px; height: 14px; }
.spin::before, .spin::after { content: ""; position: absolute; left: 1px; border: 3px solid transparent; }
.spin::before { top: -2px; border-bottom-color: #777; border-top: 0; }
.spin::after { bottom: 0; border-top-color: #777; border-bottom: 0; }
.chk { flex: none; width: 12px; height: 12px; border: 1px solid #888; background: #fff; margin: 0 8px 0 0; display: block; }

.b2 { height: 28px; border-bottom: 1px solid #a8a8a8; padding-left: 223px; background: #f7f5ee; }
.b2 .ti.close { margin-right: 10px; }
.b2 .sep { margin-right: 7px; }
.total { flex: none; }
.total em { font: 11px/14px "Liberation Mono", monospace; letter-spacing: -.6px; }

/* rebar table */
.grid-t { flex: none; width: 998px; margin-left: 1px; border-collapse: collapse; table-layout: fixed; background: #ece9d8; }
.c0 { width: 32px; } .c1 { width: 73px; } .c2 { width: 56px; } .c3 { width: 36px; } .c4 { width: 33px; } .c5 { width: 201px; } .c6 { width: 167px; } .c7 { width: 155px; } .c8 { width: 61px; } .c9 { width: 41px; } .c10 { width: 37px; } .c11 { width: 48px; } .c12 { width: 58px; }
.grid-t thead th { height: 18px; padding: 0; font-weight: 400; text-align: center; white-space: nowrap; overflow: hidden; background: linear-gradient(#fff, #ece9d8); border: 1px solid #c4c4b8; border-top: 0; }
.grid-t thead .hot { background: linear-gradient(#fbdca0, #f4b860); color: #901838; }
.grid-t tbody td { padding: 0 0 0 2px; background: #c9fcd2; border: 1px solid #a8b4a8; overflow: hidden; }
.grid-t .n { padding: 0; text-align: center; font: 400 11px/14px "Liberation Mono", monospace; background: linear-gradient(90deg, #f6f4ea, #fff 40%, #ece9d8); border: 1px solid #b8b8ac; }
.h41 { height: 41px; } .h34 { height: 34px; } .h19 { height: 19px; }
.grid-t .m { font: 11px/11.500px "Liberation Mono", monospace; letter-spacing: -.6px; white-space: nowrap; }
.grid-t .d { line-height: 11.500px; white-space: nowrap; }
.grid-t .f { line-height: 11.500px; }
.grid-t tbody .bar-r { border-right: 1px solid #000; }
.grid-t .lvl { text-align: center; padding: 0; }
.grid-t .txt { white-space: nowrap; }
.grid-t .blank td { background: #fff; }
.grid-t .shape { padding: 0; }
.grid-t .sel { background: #b3e6d0; }
.sh { display: block; width: 200px; height: 40px; }
.sh34 { height: 33px; }
.sh-t { font: 11px "Liberation Mono", monospace; letter-spacing: -.6px; fill: #222; }
.sh-r { font: 11px "Liberation Mono", monospace; letter-spacing: -.6px; fill: #b01818; }
.sh-l, .sh-b { fill: none; stroke: #000; stroke-width: 2px; }

/* floating property dialog */
.dlg { position: absolute; left: 52px; top: 27px; width: 321px; height: 606px; background: #ece9d8; border: 5px solid #0a3cc4; border-top: 0; box-shadow: inset 0 0 0 1px #2a5ee0; display: flex; flex-direction: column; border-radius: 3px 3px 0 0; }
.dlg-title { height: 22px; flex: none; margin: 0 -5px; display: flex; align-items: center; justify-content: space-between; padding: 0 6px 0 4px; background: linear-gradient(#0a58de, #3a8cf4 40%, #0e62e4); color: #fff; font-weight: 700; }
.dlg-x { width: 14px; height: 14px; padding: 0; border: 1px solid #fff; border-radius: 2px; background: #dc5a38; color: #fff; font: 700 13px/11px "Liberation Sans", sans-serif; }
.dlg-body { flex: 1; min-height: 0; display: flex; flex-direction: column; }
.pg { height: 374px; flex: none; display: flex; background: #fff; overflow: hidden; border-bottom: 1px solid #a8a8a0; }
.pg-rows { width: 292px; flex: none; padding-left: 1px; }
.pg-head, .pr { display: flex; height: 19px; }
.pg-head { height: 23px; line-height: 22px; }
.g { width: 20px; flex: none; text-align: center; background: linear-gradient(90deg, #f6f4ea, #ece9d8); border-right: 1px solid #b8b8b0; border-bottom: 1px solid #b0b0a8; font: 11px/18px "Liberation Mono", monospace; }
.k { width: 121px; flex: none; padding-left: 20px; border-right: 1px solid #b0b0a8; border-bottom: 1px solid #b0b0a8; line-height: 18px; white-space: nowrap; overflow: hidden; }
.v { width: 149px; flex: none; padding-left: 2px; border-right: 1px solid #b0b0a8; border-bottom: 1px solid #b0b0a8; color: #8c8c8c; line-height: 18px; white-space: pre; overflow: hidden; font-size: 11.500px; }
.v u { text-decoration: none; color: #222; padding: 0 1px; font-weight: 700; }
.pg-head .k { padding: 0; text-align: center; background: linear-gradient(#fff, #ece9d8); line-height: 22px; }
.pg-head .v { padding: 0; text-align: center; color: #901838; background: linear-gradient(#fbdca0, #f4b860); line-height: 22px; font-size: 12px; }
.pg-head .g { background: linear-gradient(#fff, #ece9d8); }
.blue { color: #0a0ad0; }
.dim { color: #8c8c8c; }
.tog { display: flex; align-items: center; padding-left: 3px; gap: 5px; }
.box { width: 11px; height: 11px; flex: none; border: 1px solid #888; background: #fff; color: #222; font: 400 11px/9px "Liberation Mono", monospace; text-align: center; }
.sub { padding-left: 30px; background: linear-gradient(#999, #999) 8px 9px / 16px 1px no-repeat; }
.pg-sb { flex: 1; display: flex; flex-direction: column; padding: 2px 1px 0 2px; background: #f6f4ea; }
.pg-thumb { margin-top: 86px; height: 133px; background: #c4d4f4; border: 1px solid #a8bce4; border-radius: 2px; color: #8ea4d4; text-align: center; line-height: 131px; }
.pg-sb .sb-arrow.down { margin-top: auto; margin-bottom: 1px; }
.pv { display: block; width: 311px; height: 198px; margin-top: 6px; background: #000; flex: none; }
.pv-w { fill: none; stroke: #fff; stroke-width: 1px; }
.pv-c { fill: none; stroke: #19d8dc; stroke-width: 2px; }
.pv-c2 { fill: none; stroke: #19d8dc; stroke-width: 1px; }
.pv-d { fill: none; stroke: #fff; stroke-width: 1px; stroke-dasharray: 10 3 2 3; }
.pv-f { fill: #fff; }
.pv-k { fill: #000; }
.pv-t { fill: #fff; font: 11.500px "Liberation Mono", monospace; text-anchor: middle; }

.marks { position: absolute; left: 0; top: 0; width: 1146px; height: 715px; pointer-events: none; }
.marks ellipse { fill: none; stroke: #d01018; stroke-width: 3px; }
```
